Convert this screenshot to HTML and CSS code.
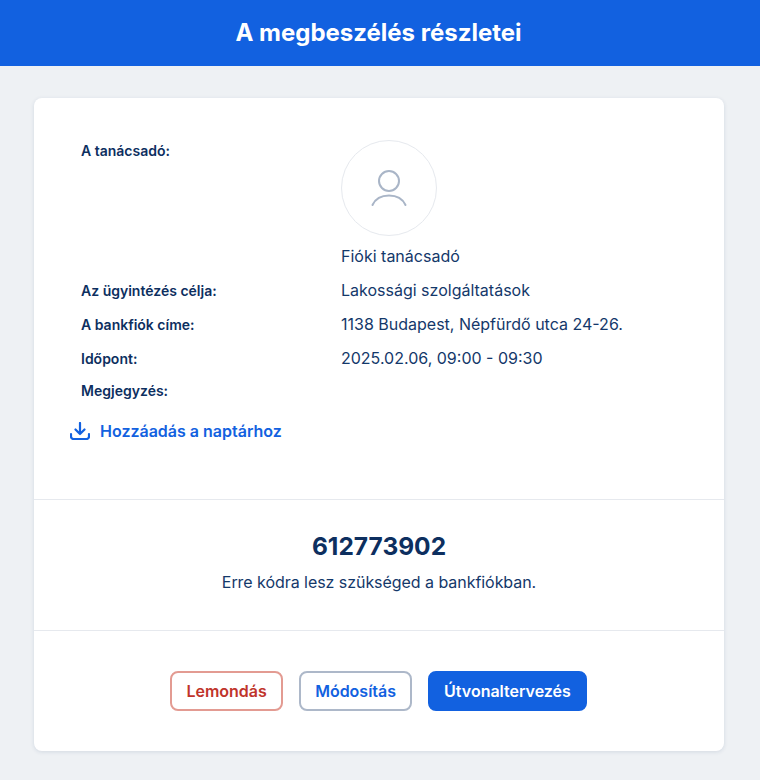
FILE: index.html
```html
<!DOCTYPE html>
<html lang="hu">
<head>
<meta charset="utf-8">
<title>A megbeszélés részletei</title>
<link rel="stylesheet" href="styles.css">
</head>
<body>
<header class="topbar"><h1 class="title">A megbeszélés részletei</h1></header>
<main class="page">
  <section class="card">
    <div class="details">
      <div class="row row-advisor">
        <div class="label">A tanácsadó:</div>
        <div class="value">
          <div class="avatar">
            <svg class="avatar-icon" viewBox="0 0 36 38" width="36" height="38" fill="none" stroke="#a9b5c7" stroke-width="2" stroke-linecap="round">
              <circle cx="18" cy="12" r="10"/>
              <path d="M1.500 36C4.500 29.500 10.500 26.500 18 26.500S31.500 29.500 34.500 36"/>
            </svg>
          </div>
          <div class="advisor-name">Fióki tanácsadó</div>
        </div>
      </div>
      <div class="row"><div class="label">Az ügyintézés célja:</div><div class="value">Lakossági szolgáltatások</div></div>
      <div class="row"><div class="label">A bankfiók címe:</div><div class="value">1138 Budapest, Népfürdő utca 24-26.</div></div>
      <div class="row"><div class="label">Időpont:</div><div class="value">2025.02.06, 09:00 - 09:30</div></div>
      <div class="row row-last"><div class="label">Megjegyzés:</div><div class="value"></div></div>
      <a class="calendar-link" href="#">
        <svg class="calendar-icon" viewBox="0 0 20 18" width="20" height="18" fill="none" stroke="#1261e0" stroke-width="2.200" stroke-linecap="round" stroke-linejoin="round">
          <path d="M10 1V12M5.500 7.500L10 12L14.500 7.500"/>
          <path d="M1 12V14.500C1 16 2 17 3.500 17H16.500C18 17 19 16 19 14.500V12"/>
        </svg>
        <span>Hozzáadás a naptárhoz</span>
      </a>
    </div>
    <div class="code-section">
      <div class="code">612773902</div>
      <p class="code-note">Erre kódra lesz szükséged a bankfiókban.</p>
    </div>
    <div class="actions">
      <button class="btn btn-cancel" type="button">Lemondás</button>
      <button class="btn btn-edit" type="button">Módosítás</button>
      <button class="btn btn-route" type="button">Útvonaltervezés</button>
    </div>
  </section>
</main>
</body>
</html>
```
FILE: styles.css
```css
* { box-sizing: border-box; }
html, body { margin: 0; padding: 0; }
body {
  background: #eef1f4;
  font-family: Inter, "Liberation Sans", sans-serif;
  color: #0d2f5f;
  height: 780px;
  overflow: hidden;
}
.topbar {
  background: #1261e0;
  height: 66px;
  display: flex;
  align-items: center;
  justify-content: center;
  padding-right: 3px;
}
.title {
  margin: 0;
  color: #fff;
  font-size: 24px;
  font-weight: 700;
  line-height: 32px;
}
.page { padding: 32px 36px 0 34px; }
.card {
  background: #fff;
  border-radius: 8px;
  box-shadow: 0 1px 4px rgba(13, 47, 95, 0.12);
  height: 653px;
}
.details {
  height: 402px;
  padding: 42px 36px 0;
  border-bottom: 1px solid #e6e9ee;
}
.row {
  display: grid;
  grid-template-columns: 260px 1fr;
  padding-left: 11px;
  height: 34px;
  align-items: start;
}
.row-advisor { height: 141px; }
.row-advisor .label { padding-top: 1px; }
.row-last { height: 29px; }
.row-last .label { margin-top: -2px; }
.label {
  font-size: 14px;
  font-weight: 600;
  line-height: 20px;
}
.value {
  font-size: 16px;
  line-height: 18px;
  color: #14386a;
}
.avatar {
  width: 96px;
  height: 96px;
  border: 1px solid #e6e9ee;
  border-radius: 50%;
  display: flex;
  align-items: center;
  justify-content: center;
}
.advisor-name { margin-top: 11px; }
.calendar-link {
  display: flex;
  align-items: center;
  gap: 10px;
  margin-top: 7px;
  color: #1261e0;
  font-size: 16px;
  font-weight: 600;
  line-height: 24px;
  text-decoration: none;
}
.code-section {
  height: 131px;
  border-bottom: 1px solid #e6e9ee;
  text-align: center;
  padding-top: 30px;
}
.code {
  font-size: 24.500px;
  font-weight: 700;
  line-height: 32px;
}
.code-note {
  margin: 8px 0 0;
  font-size: 16px;
  line-height: 24px;
  letter-spacing: -0.05px;
  color: #14386a;
}
.actions {
  display: flex;
  justify-content: center;
  gap: 16px;
  padding: 40px 1px 0 0;
}
.btn {
  height: 40px;
  padding: 0 14px;
  border-radius: 8px;
  border: 2px solid transparent;
  background: #fff;
  font-family: inherit;
  font-size: 16px;
  font-weight: 600;
  cursor: pointer;
}
.btn-cancel { border-color: #e39b92; color: #c0342b; min-width: 113px; }
.btn-edit { border-color: #adb8c9; color: #1261e0; }
.btn-route { background: #1261e0; border-color: #1261e0; color: #fff; }
```
